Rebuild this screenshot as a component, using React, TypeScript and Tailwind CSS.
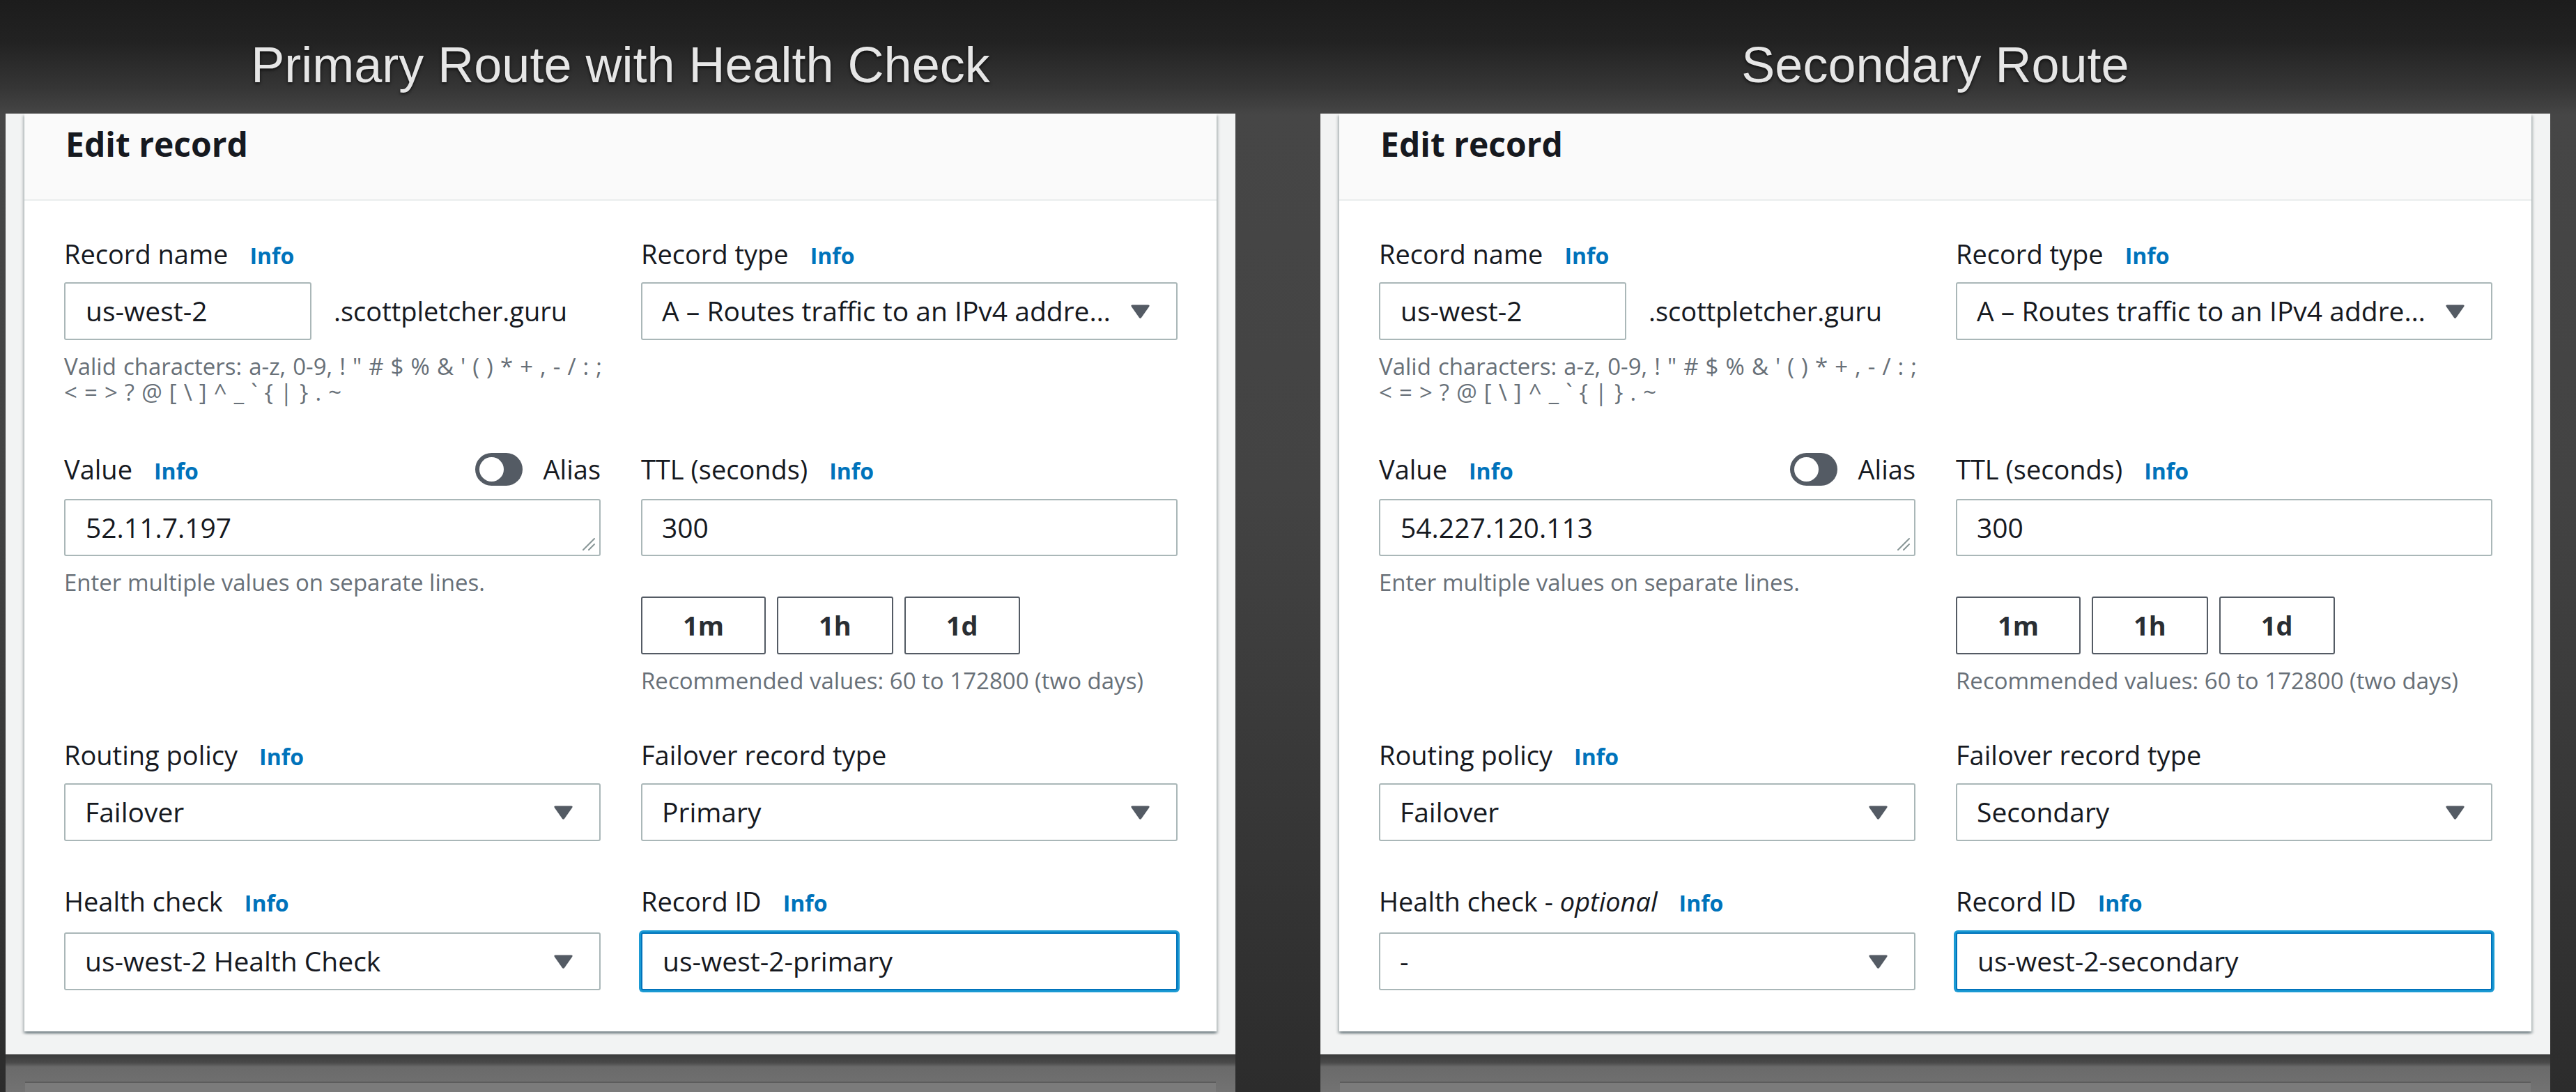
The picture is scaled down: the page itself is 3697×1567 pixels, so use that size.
import React from "react";

type PanelProps = {
  title: string;
  value: string;
  failoverType: string;
  healthLabel: React.ReactNode;
  healthValue: string;
  recordId: string;
};

function Info({ ml = "ml-[31px]" }: { ml?: string }) {
  return <span className={`${ml} text-[32px] font-bold text-[#0073bb]`}>Info</span>;
}

function Label({ children, h = "h-[48px] leading-[48px]" }: { children: React.ReactNode; h?: string }) {
  return <div className={`${h} whitespace-nowrap text-[38px] text-[#16191f]`}>{children}</div>;
}

function Arrow() {
  return (
    <svg width="29" height="22" viewBox="0 0 29 22" className="shrink-0">
      <path
        d="M3.2 1.5 H25.8 Q28.6 1.5 27.2 4 L16.3 19.6 Q14.5 22 12.7 19.6 L1.8 4 Q0.4 1.5 3.2 1.5 Z"
        fill="#545b64"
      />
    </svg>
  );
}

function Select({ value }: { value: string }) {
  return (
    <div className="flex h-[83px] items-center justify-between rounded-[3px] border-2 border-[#aab7b8] bg-white pl-[28px] pr-[37px] text-[39px] text-[#16191f]">
      <span className="whitespace-nowrap">{value}</span>
      <Arrow />
    </div>
  );
}

function Desc({ children, extra = "" }: { children: React.ReactNode; extra?: string }) {
  return (
    <div className={`mt-[19px] whitespace-nowrap text-[33px] leading-[37px] text-[#687078] ${extra}`}>{children}</div>
  );
}

function TTLButton({ label }: { label: string }) {
  return (
    <div className="flex h-[83px] items-center rounded-[3px] border-2 border-[#545b64] bg-white px-[58px] text-[38px] font-bold text-[#2a2e33]">
      {label}
    </div>
  );
}

function Panel({ title, value, failoverType, healthLabel, healthValue, recordId }: PanelProps) {
  return (
    <div className="flex w-[1765px] shrink-0 flex-col">
      <div className="h-[163px] pt-[53px] text-center font-['Liberation_Sans',Arial,sans-serif] text-[72px] leading-[80px] text-[#e6e6e6] [text-shadow:0_2px_4px_rgba(0,0,0,0.7)]">
        {title}
      </div>
      <div className="bg-[#f2f3f3] px-[27px] pb-[33px]">
        <div className="bg-white font-['Open_Sans',sans-serif] shadow-[0_3px_3px_0_rgba(0,28,36,0.3),3px_3px_3px_0_rgba(0,28,36,0.15),-3px_3px_3px_0_rgba(0,28,36,0.15)]">
          <div className="h-[125px] border-b-2 border-[#eaeded] bg-[#fafafa] pl-[59px] pt-[11px] text-[48px] font-bold leading-[65px] text-[#16191f]">
            Edit record
          </div>
          <div className="px-[57px] pb-[59px] pt-[52px]">
            {/* Row 1 */}
            <div className="grid grid-cols-[770px_770px] gap-x-[58px]">
              <div className="flex flex-col">
                <Label>
                  Record name<Info />
                </Label>
                <div className="mt-[17px] flex items-center">
                  <div className="flex h-[83px] w-[355px] items-center rounded-[3px] border-2 border-[#aab7b8] bg-white pl-[29px] text-[39px] text-[#16191f]">
                    us-west-2
                  </div>
                  <span className="ml-[32px] whitespace-nowrap text-[38px] text-[#16191f]">.scottpletcher.guru</span>
                </div>
                <div className="mt-[19px] flex flex-col whitespace-nowrap text-[33px] text-[#687078] [word-spacing:1.5px]">
                  <div className="h-[37px] leading-[37px]">
                    Valid characters: a-z, 0-9, ! &quot; # $ % &amp; &#39; ( ) * + , - / : ;
                  </div>
                  <div className="h-[37px] leading-[37px]">
                    &lt; = &gt; ? @ [ \ ] ^ _ ` {"{"} | {"}"} . ~
                  </div>
                </div>
              </div>
              <div className="flex flex-col">
                <Label>
                  Record type<Info />
                </Label>
                <div className="mt-[17px]">
                  <Select value="A – Routes traffic to an IPv4 addre…" />
                </div>
              </div>
            </div>

            {/* Row 2 */}
            <div className="mt-[66px] grid grid-cols-[770px_770px] gap-x-[58px]">
              <div className="flex flex-col">
                <div className="flex h-[52px] items-center justify-between">
                  <Label h="h-[52px] leading-[52px]">
                    Value<Info />
                  </Label>
                  <div className="flex items-center">
                    <div className="flex h-[47px] w-[68px] items-center rounded-full bg-[#545b64] pl-[6px]">
                      <div className="h-[35px] w-[35px] rounded-full bg-white" />
                    </div>
                    <span className="ml-[30px] text-[38px] leading-[52px] text-[#16191f]">Alias</span>
                  </div>
                </div>
                <div className="relative mt-[17px] flex h-[82px] items-center rounded-[3px] border-2 border-[#aab7b8] bg-white pl-[29px] text-[39px] text-[#16191f]">
                  {value}
                  <svg width="22" height="22" viewBox="0 0 22 22" className="absolute bottom-[5px] right-[5px]">
                    <path d="M20 4 L4 20 M20 12 L12 20" stroke="#879596" strokeWidth="2" strokeLinecap="round" />
                  </svg>
                </div>
                <Desc>Enter multiple values on separate lines.</Desc>
              </div>
              <div className="flex flex-col">
                <Label h="h-[52px] leading-[52px]">
                  TTL (seconds)<Info />
                </Label>
                <div className="mt-[17px] flex h-[82px] items-center rounded-[3px] border-2 border-[#aab7b8] bg-white pl-[28px] text-[39px] text-[#16191f]">
                  300
                </div>
                <div className="mt-[58px] flex gap-[16px]">
                  <TTLButton label="1m" />
                  <TTLButton label="1h" />
                  <TTLButton label="1d" />
                </div>
                <Desc>Recommended values: 60 to 172800 (two days)</Desc>
              </div>
            </div>

            {/* Row 3 */}
            <div className="mt-[64px] grid grid-cols-[770px_770px] gap-x-[58px]">
              <div className="flex flex-col">
                <Label>
                  Routing policy<Info />
                </Label>
                <div className="mt-[17px]">
                  <Select value="Failover" />
                </div>
              </div>
              <div className="flex flex-col">
                <Label>Failover record type</Label>
                <div className="mt-[17px]">
                  <Select value={failoverType} />
                </div>
              </div>
            </div>

            {/* Row 4 */}
            <div className="mt-[62px] grid grid-cols-[770px_770px] gap-x-[58px]">
              <div className="flex flex-col">
                <Label>{healthLabel}</Label>
                <div className="mt-[21px]">
                  <Select value={healthValue} />
                </div>
              </div>
              <div className="flex flex-col">
                <Label>
                  Record ID<Info />
                </Label>
                <div className="mt-[21px] flex h-[83px] items-center rounded-[3px] border-2 border-[#0073bb] bg-white pl-[29px] text-[39px] text-[#16191f] shadow-[0_0_0_3px_#1b9ad3]">
                  {recordId}
                </div>
              </div>
            </div>
          </div>
        </div>
      </div>
      <div className="flex flex-1 flex-col bg-[linear-gradient(180deg,#3a3a3a_0px,#4a4a4a_12px,#6a6a6a_18px,#737373_56px)] px-[28px] pt-[39px]">
        <div className="flex-1 border-t-2 border-[#5c5c5c] bg-[#7b7b7b]" />
      </div>
    </div>
  );
}

export default function App() {
  return (
    <div className="flex h-[1567px] w-[3697px] gap-[122px] overflow-hidden bg-[linear-gradient(180deg,#1c1c1c_0px,#222222_60px,#353535_125px,#464646_165px,#434343_700px,#2c2c2c_1567px)] pl-[8px]">
      <Panel
        title="Primary Route with Health Check"
        value="52.11.7.197"
        failoverType="Primary"
        healthLabel={
          <>
            Health check<Info />
          </>
        }
        healthValue="us-west-2 Health Check"
        recordId="us-west-2-primary"
      />
      <Panel
        title="Secondary Route"
        value="54.227.120.113"
        failoverType="Secondary"
        healthLabel={
          <>
            Health check - <i>optional</i>
            <Info />
          </>
        }
        healthValue="-"
        recordId="us-west-2-secondary"
      />
    </div>
  );
}
